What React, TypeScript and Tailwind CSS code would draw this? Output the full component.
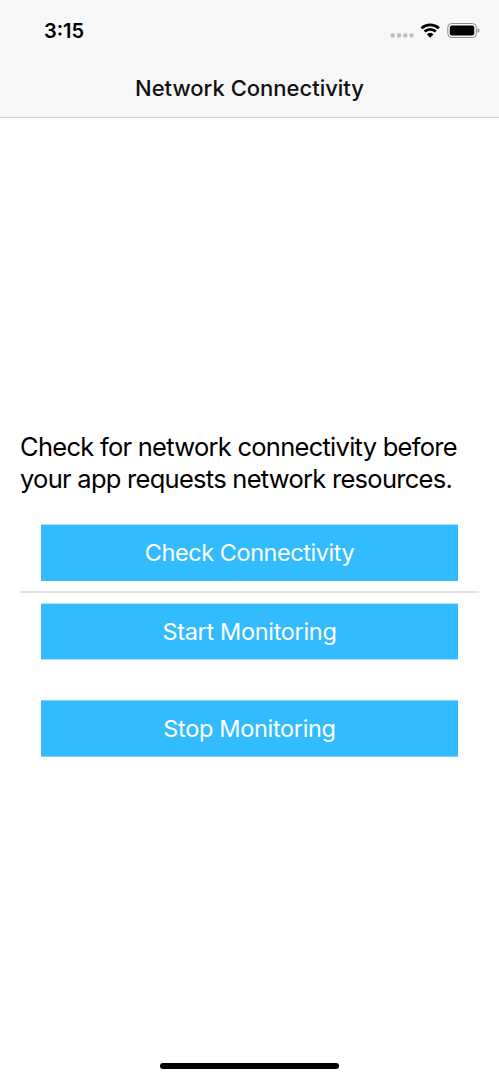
import React from "react";
import clsx from "clsx";

function StatusBar() {
  return (
    <div className="flex h-[60px] items-center justify-between pl-[44px] pr-[19px]">
      <span className="pt-[2px] text-[20px] font-semibold leading-6">3:15</span>
      <svg className="h-[18px] w-[92px]" viewBox="388 21 92 18">
        <g fill="#bdbdbe">
          <rect x="390.6" y="33.2" width="4.2" height="4.2" rx="1.6" />
          <rect x="396.9" y="33.2" width="4.2" height="4.2" rx="1.6" />
          <rect x="403.2" y="33.2" width="4.2" height="4.2" rx="1.6" />
          <rect x="409.4" y="33.2" width="4.2" height="4.2" rx="1.6" />
        </g>
        <path d="M421.5 28.3a13 13 0 0 1 17.4 0M424.6 31.5a8.3 8.3 0 0 1 11.2 0" fill="none" stroke="#000" strokeWidth="2.8" />
        <path d="M426.8 34.3a5 5 0 0 1 6.8 0l-3.4 3.5z" />
        <rect x="447.8" y="23.5" width="28.6" height="14" rx="3.8" fill="none" stroke="#8a8a8a" />
        <rect x="449.8" y="25.5" width="24.4" height="10" rx="2" />
        <path d="M477.7 28.2c2.4 1 2.4 3.8 0 4.8z" fill="#8a8a8a" />
      </svg>
    </div>
  );
}

function ActionButton({ label, className }: { label: string; className: string }) {
  return (
    <button
      className={clsx(
        "flex h-[57px] w-full items-center justify-center bg-[#33bbff] text-[23.5px] font-normal text-white",
        className,
      )}
    >
      {label}
    </button>
  );
}

export default function App() {
  return (
    <main className="flex h-[1080px] w-[499px] flex-col bg-white font-['Inter',sans-serif] text-black">
      <header className="h-[118px] border-b border-[#cfcfcf] bg-[#f7f7f7]">
        <StatusBar />
        <h1 className="flex h-[57px] items-center justify-center text-[22px] font-medium text-[#111]">Network Connectivity</h1>
      </header>
      <section className="mt-[313px] px-5">
        <p className="whitespace-nowrap text-[25.5px] leading-8 tracking-[-0.73px]">
          Check for network connectivity before
          <br />
          your app requests network resources.
        </p>
        <div className="mt-[29px] px-[21px]">
          <ActionButton label="Check Connectivity" className="border-t border-[#ade4ff] tracking-[-0.45px]" />
        </div>
        <hr className="my-[10px] border-t-2 border-[#e1e1e1]" />
        <div className="flex flex-col gap-[40px] px-[21px]">
          <ActionButton label="Start Monitoring" className="border-y border-[#ade4ff] tracking-[-0.33px]" />
          <ActionButton label="Stop Monitoring" className="border-y border-[#7fd4ff] tracking-[-0.33px]" />
        </div>
      </section>
      <div className="mx-auto mb-[11px] mt-auto h-[6px] w-[179px] rounded-full bg-black" />
    </main>
  );
}
